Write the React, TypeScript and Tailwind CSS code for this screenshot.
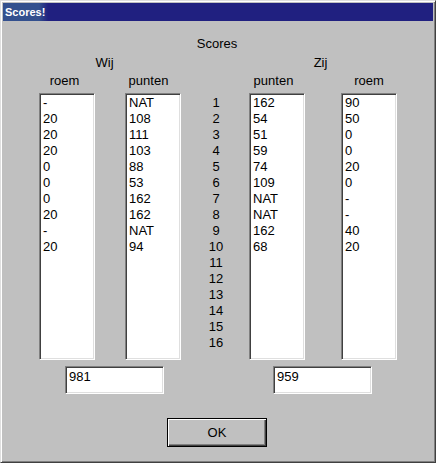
import React from "react";

const wijRoem = ["-", "20", "20", "20", "0", "0", "0", "20", "-", "20"];
const wijPunten = ["NAT", "108", "111", "103", "88", "53", "162", "162", "NAT", "94"];
const zijPunten = ["162", "54", "51", "59", "74", "109", "NAT", "NAT", "162", "68"];
const zijRoem = ["90", "50", "0", "0", "20", "0", "-", "-", "40", "20"];

function ListBox({ items }: { items: string[] }) {
  return (
    <div className="w-[56px] h-[267px] bg-white border border-t-[#808080] border-l-[#808080] border-r-white border-b-white shadow-[inset_1px_1px_0_#404040,inset_-1px_-1px_0_#dfdfdf] pl-[2px] pt-[1px] overflow-hidden">
      {items.map((t, i) => (
        <div key={i} className="h-[16px] leading-[16px] pl-[1px]">
          {t}
        </div>
      ))}
    </div>
  );
}

function Column({ label, items, labelClass }: { label: string; items: string[]; labelClass: string }) {
  return (
    <div className="flex flex-col w-[56px]">
      <div className={`h-[16px] leading-[16px] text-center whitespace-nowrap mb-[4px] ${labelClass}`}>{label}</div>
      <ListBox items={items} />
    </div>
  );
}

function TotalBox({ value }: { value: string }) {
  return (
    <div className="w-[99px] h-[28px] bg-white border border-t-[#808080] border-l-[#808080] border-r-white border-b-white shadow-[inset_1px_1px_0_#404040,inset_-1px_-1px_0_#dfdfdf] pl-[3px] pt-[2px] leading-[16px]">
      {value}
    </div>
  );
}

export default function App() {
  const nums = Array.from({ length: 16 }, (_, i) => String(i + 1));
  return (
    <div
      className="w-[436px] h-[463px] bg-[#c0c0c0] border border-t-[#dfdfdf] border-l-[#dfdfdf] border-r-[#404040] border-b-[#404040] shadow-[inset_1px_1px_0_#ffffff,inset_-1px_-1px_0_#808080] p-[2px] text-black text-[13px] overflow-hidden"
      style={{ fontFamily: '"Liberation Sans", Arial, sans-serif' }}
    >
      <div className="h-[18px] bg-[#202080] flex items-center">
        <div className="h-full flex items-center pl-[2px] pr-[3px] bg-[linear-gradient(to_right,#33508e_80%,#202080)]">
          <span className="text-white font-bold text-[11px] leading-[18px]">Scores!</span>
        </div>
      </div>

      <div className="flex flex-col">
        <div className="h-[16px] leading-[16px] text-center mt-[15px] pr-[2px]">Scores</div>

        <div className="flex flex-row pl-[36px] mt-[3px]">
          <div className="flex flex-col w-[141px]">
            <div className="h-[16px] leading-[16px] text-center pr-[10px] mb-[2px]">Wij</div>
            <div className="flex flex-row gap-[30px]">
              <Column label="roem" items={wijRoem} labelClass="pr-[5px]" />
              <Column label="punten" items={wijPunten} labelClass="pr-[9px]" />
            </div>
          </div>

          <div className="w-[69px] flex flex-col pt-[40px] pl-[3px]">
            {nums.map((n) => (
              <div key={n} className="h-[16px] leading-[16px] text-center">
                {n}
              </div>
            ))}
          </div>

          <div className="flex flex-col w-[147px]">
            <div className="h-[16px] leading-[16px] text-center pr-[4px] mb-[2px]">Zij</div>
            <div className="flex flex-row gap-[36px]">
              <Column label="punten" items={zijPunten} labelClass="pr-[7px]" />
              <Column label="roem" items={zijRoem} labelClass="" />
            </div>
          </div>
        </div>

        <div className="flex flex-row pl-[62px] mt-[6px]">
          <TotalBox value="981" />
          <div className="ml-[109px]">
            <TotalBox value="959" />
          </div>
        </div>

        <div className="pl-[164px] mt-[24px]">
          <button className="w-[100px] h-[29px] bg-[#c0c0c0] border border-black shadow-[inset_1px_1px_0_#ffffff,inset_-1px_-1px_0_#404040,inset_-2px_-2px_0_#808080] leading-[16px] text-[13px]">
            OK
          </button>
        </div>
      </div>
    </div>
  );
}
